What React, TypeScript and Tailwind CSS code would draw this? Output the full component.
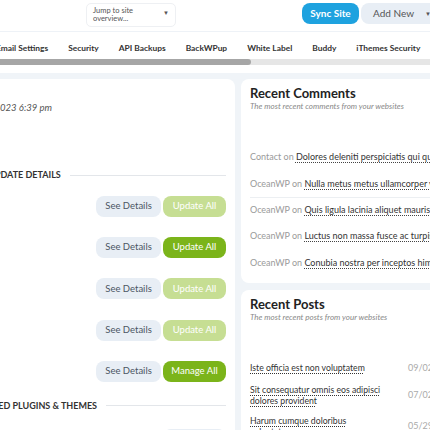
import React from "react";

const font = { fontFamily: "Lato, 'Open Sans', sans-serif" };

function SeeDetails() {
  return (
    <span className="flex h-[21px] w-[65px] items-center justify-center rounded-[8px] bg-[#e8eef5] text-[9.5px] text-[#4b5563]">
      See Details
    </span>
  );
}

function Action({ label, active }: { label: string; active: boolean }) {
  return (
    <span
      className={
        "flex h-[21px] w-[63px] items-center justify-center rounded-[8px] text-[9.5px] text-white " +
        (active ? "bg-[#7bb41a]" : "bg-[#c6de93]")
      }
    >
      {label}
    </span>
  );
}

function Divider({ label }: { label: string }) {
  return (
    <div className="flex items-center gap-[9px]">
      <div className="h-px flex-1 bg-[#e3e6ea]" />
      <span className="whitespace-nowrap text-[9px] font-bold text-[#333]">{label}</span>
      <div className="h-px flex-1 bg-[#e3e6ea]" />
    </div>
  );
}

const rows: { label: string; active: boolean }[] = [
  { label: "Update All", active: false },
  { label: "Update All", active: true },
  { label: "Update All", active: false },
  { label: "Update All", active: false },
  { label: "Manage All", active: true },
];

const comments = [
  ["Contact", "Dolores deleniti perspiciatis qui qui"],
  ["OceanWP", "Nulla metus metus ullamcorper vel"],
  ["OceanWP", "Quis ligula lacinia aliquet mauris ipsum"],
  ["OceanWP", "Luctus non massa fusce ac turpis quis"],
  ["OceanWP", "Conubia nostra per inceptos himenaeos"],
];

const posts = [
  ["Iste officia est non voluptatem", "09/02/2023"],
  ["Sit consequatur omnis eos adipisci dolores provident", "07/02/2023"],
  ["Harum cumque doloribus voluptatem", "05/29/2023"],
];

export default function App() {
  return (
    <div className="h-[430px] w-[430px] overflow-hidden bg-[#f0f4f8]" style={font}>
      {/* header */}
      <div className="flex h-[32px] items-start border-b border-[#eef2f7] bg-white">
        <div className="ml-[86px] mt-[3px] flex h-[24px] w-[90px] shrink-0 items-start justify-between rounded-[5px] border border-[#eef0f3] px-[6px] pt-[3px]">
          <span className="text-[7.5px] leading-[8px] text-[#555]">
            Jump to site
            <br />
            overview...
          </span>
          <span className="mt-[1px] text-[6px] text-[#555]">▼</span>
        </div>
        <div className="ml-[126px] mt-[3px] flex h-[21px] w-[57px] shrink-0 items-center justify-center rounded-[8px] bg-[#1ea2df] text-[10px] font-bold text-white">
          Sync Site
        </div>
        <div className="ml-[2px] mt-[3px] flex h-[21px] w-[80px] shrink-0 items-center whitespace-nowrap rounded-l-[8px] bg-[#e8eef5] pl-[12px] text-[10px] text-[#555]">
          Add New
          <span className="ml-[11px] text-[6px]">▼</span>
        </div>
      </div>

      {/* nav */}
      <div className="bg-white">
        <div className="-ml-[4px] flex h-[27px] items-center gap-[20px] whitespace-nowrap pt-[6px] text-[8.4px] font-bold text-[#333]">
          <span>Email Settings</span>
          <span>Security</span>
          <span>API Backups</span>
          <span>BackWPup</span>
          <span>White Label</span>
          <span>Buddy</span>
          <span>iThemes Security</span>
          <span>Other</span>
        </div>
        <div className="h-[6px] bg-[#e6e6e6]">
          <div className="h-[6px] w-[251px] rounded-r-full bg-[#a6a6a6]" />
        </div>
        <div className="h-[8px] bg-white" />
      </div>

      {/* body */}
      <div className="mt-[6px] flex items-start gap-[6px]">
        {/* left card */}
        <div className="-ml-[186px] h-[400px] w-[421px] shrink-0 rounded-[8px] bg-white px-[9px] pt-[22px]">
          <div className="w-[229px] text-right text-[9.5px] italic text-[#555]">
            Last sync: 09/05/2023 6:39 pm
          </div>
          <div className="mt-[53px]">
            <Divider label="UPDATE DETAILS" />
          </div>
          <div className="mt-[14px] flex flex-col gap-[20.3px]">
            {rows.map((r, i) => (
              <div key={i} className="flex items-center justify-between">
                <span className="text-[10px] text-[#333]">Updates</span>
                <div className="flex gap-[2px]">
                  <SeeDetails />
                  <Action label={r.label} active={r.active} />
                </div>
              </div>
            ))}
          </div>
          <div className="mt-[17px]">
            <Divider label="ABANDONED PLUGINS & THEMES" />
          </div>
          <div className="mt-[17px] flex justify-end">
            <div className="h-[21px] w-[63px] rounded-[8px] bg-[#e8eef5]" />
          </div>
        </div>

        {/* right column */}
        <div className="flex w-[220px] shrink-0 flex-col gap-[7px]">
          <div className="h-[204px] rounded-[8px] bg-white pl-[9px] pt-[6px]">
            <div className="text-[13px] font-bold leading-[16px] text-[#222]">Recent Comments</div>
            <div className="text-[8px] italic leading-[11px] text-[#888]">
              The most recent comments from your websites
            </div>
            <div className="mt-[32px] flex flex-col whitespace-nowrap text-[9px]">
              {comments.map(([who, text], i) => (
                <div
                  key={i}
                  className={
                    "flex h-[26.3px] items-center " + (i === 2 ? "border-t border-[#eceff2]" : "")
                  }
                >
                  <span className="text-[#9a9a9a]">{who} on&nbsp;</span>
                  <span className="text-[#333] underline decoration-dotted decoration-[#444] underline-offset-2">
                    {text}
                  </span>
                </div>
              ))}
            </div>
          </div>
          <div className="h-[200px] rounded-[8px] bg-white pl-[9px] pt-[6px]">
            <div className="text-[13px] font-bold leading-[16px] text-[#222]">Recent Posts</div>
            <div className="text-[8px] italic leading-[11px] text-[#888]">
              The most recent posts from your websites
            </div>
            <div className="mt-[38px] flex flex-col gap-[9px]">
              {posts.map(([t, d], i) => (
                <div key={i} className="flex items-center">
                  <span className="w-[138px] text-[8.7px] leading-[11px] text-[#333] underline decoration-dotted underline-offset-2">
                    {t}
                  </span>
                  <span className="ml-[20px] text-[9px] text-[#aaa]">{d}</span>
                </div>
              ))}
            </div>
          </div>
        </div>
      </div>
    </div>
  );
}
